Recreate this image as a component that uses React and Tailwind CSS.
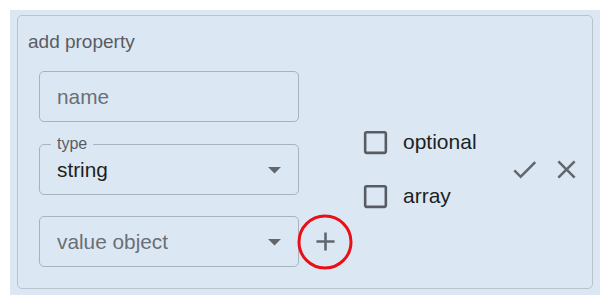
const font = { fontFamily: '"Liberation Sans", Arial, Helvetica, sans-serif' };

function ArrowDown() {
  return (
    <svg viewBox="0 0 24 24" className="h-[31px] w-[31px] fill-[#62676d]">
      <path d="M7 10l5 5 5-5z" />
    </svg>
  );
}

function BoxIcon() {
  return (
    <svg viewBox="0 0 24 24" className="h-[31px] w-[31px] fill-[#585c62]">
      <path d="M19 5v14H5V5h14m0-2H5c-1.11 0-2 .9-2 2v14c0 1.1.89 2 2 2h14c1.1 0 2-.9 2-2V5c0-1.1-.9-2-2-2z" />
    </svg>
  );
}

function Field({ children, label }) {
  return (
    <div className="relative flex h-[51px] w-[260px] items-center justify-between rounded-[5px] border border-[#a9b2bd] pl-[17px] pr-[8px]">
      {label && (
        <span className="absolute left-[11px] top-[-11px] bg-[#dce7f4] px-[6px] text-[16px] leading-[20px] text-[#585c62]">
          {label}
        </span>
      )}
      {children}
    </div>
  );
}

function Check({ label }) {
  return (
    <label className="flex h-[42px] items-center gap-[12px]">
      <BoxIcon />
      <span className="text-[21px] text-[#1d1f21]">{label}</span>
    </label>
  );
}

export default function App() {
  return (
    <div className="h-[306px] w-[610px] bg-white p-[10px]" style={font}>
      <div className="h-[285px] w-[590px] bg-[#dce7f4] px-[7px] pb-[6px] pt-[5px]">
        <div className="h-full rounded-[5px] border border-[#b9c3ce] pl-[10px] pt-[15px]">
          <div className="text-[19px] leading-[22px] text-[#585c62]">add property</div>

          <div className="mt-[18px] flex items-center pl-[11px]">
            <div className="flex flex-col">
              <Field>
                <span className="text-[20.8px] text-[#6a6f75]">name</span>
              </Field>
              <div className="mt-[22px]">
                <Field label="type">
                  <span className="text-[20.8px] text-[#1d1f21]">string</span>
                  <ArrowDown />
                </Field>
              </div>
              <div className="mt-[21px] flex items-center">
                <Field>
                  <span className="text-[20.8px] text-[#6a6f75]">value object</span>
                  <ArrowDown />
                </Field>
                <button className="relative ml-[6px] grid h-[40px] w-[40px] place-items-center">
                  <svg viewBox="0 0 24 24" className="h-[31px] w-[31px] fill-[#62676d]">
                    <path d="M19 13h-6v6h-2v-6H5v-2h6V5h2v6h6v2z" />
                  </svg>
                  <span className="pointer-events-none absolute left-1/2 top-1/2 h-[55px] w-[55px] -translate-x-1/2 -translate-y-1/2 rounded-full border-[3px] border-[#ea0f17]" />
                </button>
              </div>
            </div>

            <div className="ml-[15px] flex flex-col gap-[12px]">
              <Check label="optional" />
              <Check label="array" />
            </div>

            <div className="ml-[32px] flex items-center gap-[11px]">
              <button>
                <svg viewBox="0 0 24 24" className="h-[31px] w-[31px] fill-[#62676d]">
                  <path d="M9 16.17 4.83 12l-1.42 1.41L9 19 21 7l-1.41-1.41z" />
                </svg>
              </button>
              <button>
                <svg viewBox="0 0 24 24" className="h-[31px] w-[31px] fill-[#62676d]">
                  <path d="M19 6.41 17.59 5 12 10.59 6.41 5 5 6.41 10.59 12 5 17.59 6.41 19 12 13.41 17.59 19 19 17.59 13.41 12z" />
                </svg>
              </button>
            </div>
          </div>
        </div>
      </div>
    </div>
  );
}
